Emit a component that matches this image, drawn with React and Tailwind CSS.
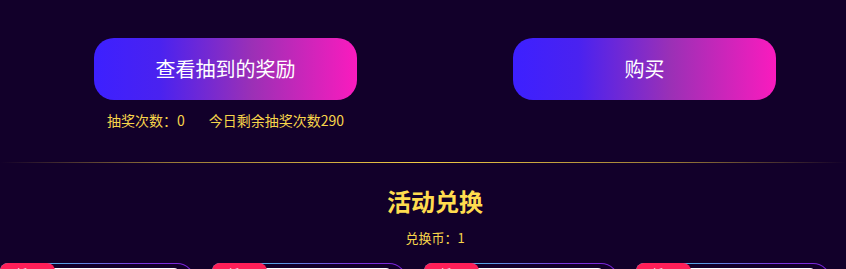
import React from "react";

const cards = [1, 2, 3, 4];

export default function App() {
  return (
    <div
      className="w-[846px] h-[269px] overflow-hidden bg-[#12002a]"
      style={{ fontFamily: '"Noto Sans CJK SC", "Noto Sans", sans-serif' }}
    >
      <div className="flex pl-[94px] pt-[38px] gap-[156px]">
        <div className="flex flex-col items-center">
          <button className="w-[263px] h-[62px] rounded-[20px] bg-[linear-gradient(90deg,#3d20ff_0%,#4a22f0_25%,#9b30b6_60%,#fa1bbe_100%)] text-white text-[20px]">
            查看抽到的奖励
          </button>
          <div className="flex gap-[24px] mt-[10px] text-[14px] leading-[20px] text-[#f7d54a]">
            <span>抽奖次数：0</span>
            <span>今日剩余抽奖次数290</span>
          </div>
        </div>
        <button className="w-[263px] h-[62px] rounded-[20px] bg-[linear-gradient(90deg,#3d20ff_0%,#4a22f0_25%,#9b30b6_60%,#fa1bbe_100%)] text-white text-[20px]">
          购买
        </button>
      </div>

      <div className="mt-[32px] h-px bg-[linear-gradient(90deg,rgba(240,200,64,0)_0%,rgba(240,200,64,0.6)_20%,#f2cb45_50%,rgba(240,200,64,0.6)_80%,rgba(240,200,64,0)_100%)]" />

      <div className="flex flex-col items-center pl-[24px]">
        <h2 className="mt-[22px] text-[24px] leading-[32px] font-bold text-[#ffdc4f]">活动兑换</h2>
        <p className="mt-[12px] text-[13px] leading-[18px] text-[#f7d54a]">兑换币：1</p>
      </div>

      <div className="flex gap-[17px] mt-[16px]">
        {cards.map((c) => (
          <div
            key={c}
            className="relative w-[195px] h-[150px] rounded-tr-[18px] rounded-tl-[8px] p-px bg-[linear-gradient(90deg,#3fd0e8_0%,#5a9ae4_35%,#7a3ae0_70%,#7a1fd8_100%)]"
          >
            <div className="w-full h-full rounded-tr-[17px] rounded-tl-[8px] bg-[#12002a] pt-[4px] pr-[14px] pl-[8px]">
              <div className="h-[120px] rounded-[6px] bg-white" />
            </div>
            <div className="absolute left-0 top-0 w-[55px] h-[22px] rounded-t-[8px] bg-[#ff1f58] text-white text-[12px] leading-[22px] text-center">
              新品
            </div>
          </div>
        ))}
      </div>
    </div>
  );
}
